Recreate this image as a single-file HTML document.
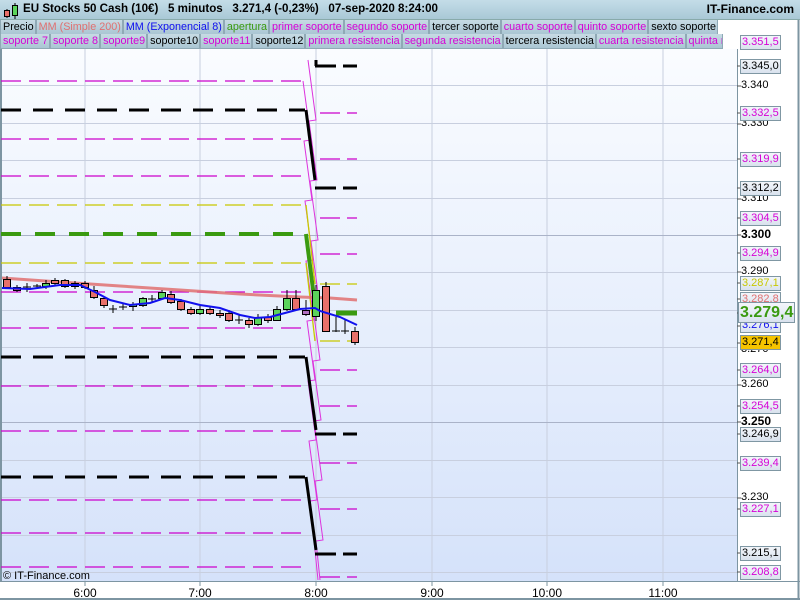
<!DOCTYPE html>
<html><head><meta charset="utf-8"><style>
body{margin:0;width:800px;height:600px;overflow:hidden;background:#fff;font-family:"Liberation Sans",sans-serif;position:relative}
#top{position:absolute;left:0;top:0;width:800px;height:19px;background:linear-gradient(#c4dde8,#a9c8d6);border-bottom:1px solid #8aa;}
#top .t{position:absolute;left:23px;top:2px;font-size:11.6px;font-weight:bold;color:#000;white-space:pre}
#top .r{position:absolute;right:6px;top:2px;font-size:12px;font-weight:bold}
.row{position:absolute;left:0;height:15px;display:flex;background:#fff}
.row span{font-size:10.8px;line-height:14px;padding:0 1px 0 2px;background:linear-gradient(#c7dbe4,#aac6d3);border:1px solid #8fa9b5;border-top:0;white-space:nowrap}
.m{color:#d600d6}.k{color:#000}
.lab{position:absolute;font-size:11px;left:741px;line-height:13px;white-space:nowrap}
.bx{border:1px solid #7f97a3;background:linear-gradient(#f3f6fb,#d9e2ee);padding:0 1px;left:740px}
</style></head><body>
<svg width="800" height="600" style="position:absolute;left:0;top:0">
<defs><linearGradient id="g" x1="0" y1="0" x2="0" y2="1"><stop offset="0" stop-color="#fafcff"/><stop offset="1" stop-color="#d5e2fa"/></linearGradient></defs>
<rect x="2" y="49" width="735" height="532" fill="url(#g)"/>
<line x1="1" y1="0" x2="1" y2="600" stroke="#7d95a2" stroke-width="2"/>
<g stroke="#c8cfdf" stroke-width="1">
<line x1="85" y1="49" x2="85" y2="581"/><line x1="200" y1="49" x2="200" y2="581"/><line x1="316" y1="49" x2="316" y2="581"/><line x1="432" y1="49" x2="432" y2="581"/><line x1="547" y1="49" x2="547" y2="581"/><line x1="663" y1="49" x2="663" y2="581"/>
<line x1="2" y1="85.5" x2="737" y2="85.5"/><line x1="2" y1="123.5" x2="737" y2="123.5"/><line x1="2" y1="160.5" x2="737" y2="160.5"/><line x1="2" y1="198.5" x2="737" y2="198.5"/><line x1="2" y1="272.5" x2="737" y2="272.5"/><line x1="2" y1="310.5" x2="737" y2="310.5"/><line x1="2" y1="347.5" x2="737" y2="347.5"/><line x1="2" y1="385.5" x2="737" y2="385.5"/><line x1="2" y1="460.5" x2="737" y2="460.5"/><line x1="2" y1="497.5" x2="737" y2="497.5"/><line x1="2" y1="535.5" x2="737" y2="535.5"/><line x1="2" y1="572.5" x2="737" y2="572.5"/>
</g>
<g stroke="#aab3c8"><line x1="2" y1="235.5" x2="737" y2="235.5"/><line x1="2" y1="422.5" x2="737" y2="422.5"/></g>
<g stroke="#cc00cc" stroke-width="1.3" stroke-dasharray="20 8">
<line x1="1" y1="81" x2="305" y2="81"/><line x1="1" y1="139" x2="305" y2="139"/><line x1="1" y1="176" x2="305" y2="176"/><line x1="1" y1="292" x2="305" y2="292"/><line x1="1" y1="328" x2="305" y2="328"/><line x1="1" y1="386" x2="305" y2="386"/><line x1="1" y1="431" x2="305" y2="431"/><line x1="1" y1="500" x2="305" y2="500"/><line x1="1" y1="533" x2="305" y2="533"/><line x1="1" y1="567" x2="305" y2="567"/>
</g>
<g stroke="#c8c800" stroke-width="1.3" stroke-dasharray="20 8"><line x1="1" y1="205" x2="305" y2="205"/><line x1="1" y1="263" x2="305" y2="263"/></g>
<g stroke="#000" stroke-width="3" stroke-dasharray="20 12"><line x1="1" y1="110" x2="305" y2="110"/><line x1="1" y1="357" x2="305" y2="357"/><line x1="1" y1="477" x2="305" y2="477"/></g>
<line x1="1" y1="234" x2="305" y2="234" stroke="#3a9a10" stroke-width="4" stroke-dasharray="20 14"/>
<g stroke="#dd33dd" stroke-width="1" fill="none">
<polyline points="303,81 311,140 304,141 312,200 305,201 313,260 306,261 314,320 307,321 315,380 308,381 316,440 309,441 317,500 310,501 318,580"/>
<polyline points="308,60 316,120 309,121 317,180 310,181 318,240 311,241 319,300 312,301 320,360 313,361 321,420 314,421 322,480 315,481 323,540 316,541 320,580"/>
</g>
<g stroke="#000" stroke-width="3"><line x1="306" y1="110" x2="315" y2="180"/><line x1="306" y1="357" x2="316" y2="430"/><line x1="306" y1="477" x2="316" y2="550"/><line x1="316" y1="60" x2="316" y2="66"/></g>
<g stroke="#3a9a10" stroke-width="4"><line x1="306" y1="234" x2="316" y2="313"/></g>
<g stroke="#c8c800" stroke-width="1.3"><line x1="306" y1="205" x2="315" y2="284"/><line x1="306" y1="263" x2="315" y2="341"/></g>
<g stroke="#000" stroke-width="3"><line x1="315" y1="66" x2="336" y2="66"/><line x1="343" y1="66" x2="357" y2="66"/><line x1="315" y1="188" x2="336" y2="188"/><line x1="343" y1="188" x2="357" y2="188"/><line x1="315" y1="434" x2="336" y2="434"/><line x1="343" y1="434" x2="357" y2="434"/><line x1="315" y1="554" x2="336" y2="554"/><line x1="343" y1="554" x2="357" y2="554"/></g>
<g stroke="#cc00cc" stroke-width="1.3">
<path d="M320 113h20M347 113h10M320 159h20M347 159h10M320 218h20M347 218h10M320 254h20M347 254h10M320 370h20M347 370h10M320 406h20M347 406h10M320 463h20M347 463h10M320 509h20M347 509h10M320 577h20M347 577h10"/></g>
<g stroke="#c8c800" stroke-width="1.3"><path d="M320 284h20M347 284h10M320 341h20M347 341h10"/></g>
<path d="M336 313h21" stroke="#3a9a10" stroke-width="5"/>
<polyline points="2,278 60,282 120,286 180,290 240,294 300,297 330,298 357,300" stroke="#e07070" stroke-width="3" fill="none" opacity="0.85"/>
<g stroke="#000" stroke-width="1">
<path d="M7 276v13M17 285v7M27 283v9M37 284v4M46 280v9M55 278v8M65 279v9M75 281v8M85 281v8M94 286v13M104 296v12M113 305v8M123 304v6M133 302v9M143 297v10M152 295v7M162 290v10M171 291v13M181 299v12M191 307v8M200 306v9M210 307v8M220 310v8M229 310v12M239 315v9M249 318v10M258 314v12M268 314v9M277 306v15M287 290v21M296 290v21M306 300v16M316 285v36M326 282v50M336 317v15M345 320v14M355 327v18"/>
<path d="M23 287h8M33 286h8M109 309h8M119 307h8M148 299h8M235 320h8M332 331h8M341 331h8"/>
</g>
<g stroke="#000" stroke-width="1">
<rect x="3.5" y="279.5" width="7" height="8" fill="#e8706a"/><rect x="13.5" y="287.5" width="7" height="3" fill="#e8706a"/>
<rect x="42.5" y="283.5" width="7" height="3" fill="#5bd45b"/><rect x="51.5" y="280.5" width="7" height="3" fill="#e8706a"/><rect x="61.5" y="280.5" width="7" height="6" fill="#e8706a"/><rect x="71.5" y="283.5" width="7" height="3" fill="#5bd45b"/><rect x="81.5" y="283.5" width="7" height="4" fill="#e8706a"/>
<rect x="90.5" y="290.5" width="7" height="7" fill="#e8706a"/><rect x="100.5" y="298.5" width="7" height="7" fill="#e8706a"/>
<rect x="129.5" y="304.5" width="7" height="2" fill="#5bd45b"/><rect x="139.5" y="298.5" width="7" height="7" fill="#5bd45b"/><rect x="158.5" y="292.5" width="7" height="6" fill="#5bd45b"/><rect x="167.5" y="294.5" width="7" height="8" fill="#e8706a"/><rect x="177.5" y="301.5" width="7" height="8" fill="#e8706a"/>
<rect x="187.5" y="309.5" width="7" height="4" fill="#e8706a"/><rect x="196.5" y="309.5" width="7" height="4" fill="#5bd45b"/><rect x="206.5" y="309.5" width="7" height="4" fill="#e8706a"/><rect x="216.5" y="313.5" width="7" height="2" fill="#e8706a"/><rect x="225.5" y="313.5" width="7" height="7" fill="#e8706a"/>
<rect x="245.5" y="320.5" width="7" height="4" fill="#e8706a"/><rect x="254.5" y="317.5" width="7" height="7" fill="#5bd45b"/><rect x="264.5" y="317.5" width="7" height="3" fill="#e8706a"/><rect x="273.5" y="309.5" width="7" height="11" fill="#5bd45b"/><rect x="283.5" y="298.5" width="7" height="11" fill="#5bd45b"/><rect x="292.5" y="298.5" width="7" height="11" fill="#e8706a"/>
<rect x="302.5" y="310.5" width="7" height="4" fill="#b070c0"/><rect x="312.5" y="290.5" width="7" height="26" fill="#5bd45b"/><rect x="322.5" y="286.5" width="7" height="45" fill="#e8706a"/><rect x="351.5" y="331.5" width="7" height="11" fill="#e8706a"/>
</g>
<polyline points="2,288 30,289 60,285 80,285 95,292 110,300 130,305 150,303 165,298 180,300 200,305 220,308 240,315 255,318 270,317 285,313 300,309 315,308 320,311 340,317 357,325" stroke="#1010ee" stroke-width="2" fill="none"/>
<rect x="0" y="581" width="800" height="19" fill="#fff"/>
<line x1="0" y1="581.5" x2="800" y2="581.5" stroke="#7d95a2"/>
<line x1="737.5" y1="49" x2="737.5" y2="581" stroke="#7d95a2"/>
<line x1="798.5" y1="0" x2="798.5" y2="600" stroke="#7d95a2" stroke-width="2"/>
<line x1="0" y1="599" x2="800" y2="599" stroke="#7d95a2" stroke-width="2"/>
<g stroke="#7d95a2"><path d="M85 581v5M200 581v5M316 581v5M432 581v5M547 581v5M663 581v5"/></g>
<g font-size="12" fill="#000" text-anchor="middle" font-family="Liberation Sans"><text x="85" y="597">6:00</text><text x="200" y="597">7:00</text><text x="316" y="597">8:00</text><text x="432" y="597">9:00</text><text x="547" y="597">10:00</text><text x="663" y="597">11:00</text></g>
<text x="3" y="579" font-size="11" font-family="Liberation Sans">© IT-Finance.com</text>
<g stroke="#555"><path d="M737 66h4M737 86h4M737 113h4M737 124h4M737 159h4M737 188h4M737 199h4M737 218h4M737 235h4M737 253h4M737 272h4M737 283h4M737 299h4M737 313h4M737 326h4M737 343h4M737 370h4M737 385h4M737 406h4M737 422h4M737 434h4M737 463h4M737 498h4M737 509h4M737 553h4M737 572h4"/></g>
</svg>
<div id="top"><svg width="18" height="19" style="position:absolute;left:2px;top:1px"><path d="M5 8v9M13 2v16" stroke="#000"/><rect x="2.5" y="9.5" width="5" height="6" fill="#e8706a" stroke="#000"/><rect x="10.5" y="4.5" width="5" height="10" fill="#5bd45b" stroke="#000"/></svg><div class="t">EU Stocks 50 Cash (10€)   5 minutos   3.271,4 (-0,23%)   07-sep-2020 8:24:00</div><div class="r">IT-Finance.com</div></div>
<div class="row" style="top:20px"><span class="k">Precio</span><span style="color:#e07070">MM (Simple 200)</span><span style="color:#1010ee">MM (Exponencial 8)</span><span style="color:#3a9a10">apertura</span><span class="m">primer soporte</span><span class="m">segundo soporte</span><span class="k">tercer soporte</span><span class="m">cuarto soporte</span><span class="m">quinto soporte</span><span class="k">sexto soporte</span></div>
<div class="row" style="top:34px"><span class="m">soporte 7</span><span class="m">soporte 8</span><span class="m">soporte9</span><span class="k">soporte10</span><span class="m">soporte11</span><span class="k">soporte12</span><span class="m">primera resistencia</span><span class="m">segunda resistencia</span><span class="k">tercera resistencia</span><span class="m">cuarta resistencia</span><span class="m" style="width:32px;overflow:hidden">quinta resistencia</span></div>
<div class="lab bx m" style="top:35px">3.351,5</div>
<div class="lab bx" style="top:59px">3.345,0</div>
<div class="lab" style="top:79px">3.340</div>
<div class="lab" style="top:117px">3.330</div>
<div class="lab bx m" style="top:106px">3.332,5</div>
<div class="lab bx m" style="top:152px">3.319,9</div>
<div class="lab" style="top:192px">3.310</div>
<div class="lab bx" style="top:181px">3.312,2</div>
<div class="lab bx m" style="top:211px">3.304,5</div>
<div class="lab" style="top:228px;font-weight:bold;font-size:12px">3.300</div>
<div class="lab bx m" style="top:246px">3.294,9</div>
<div class="lab" style="top:265px">3.290</div>
<div class="lab bx" style="top:276px;color:#c8c800">3.287,1</div>
<div class="lab bx" style="top:292px;color:#e07070">3.282,8</div>
<div class="lab bx" style="top:318px;color:#1010ee">3.276,1</div>
<div class="lab bx" style="top:302px;left:738px;font-size:16px;line-height:19px;font-weight:bold;color:#3a9a10">3.279,4</div>
<div class="lab" style="top:343px">3.270</div>
<div class="lab bx" style="top:335px;background:#f5c400">3.271,4</div>
<div class="lab bx m" style="top:363px">3.264,0</div>
<div class="lab" style="top:378px">3.260</div>
<div class="lab bx m" style="top:399px">3.254,5</div>
<div class="lab" style="top:415px;font-weight:bold;font-size:12px">3.250</div>
<div class="lab bx" style="top:427px">3.246,9</div>
<div class="lab bx m" style="top:456px">3.239,4</div>
<div class="lab" style="top:491px">3.230</div>
<div class="lab bx m" style="top:502px">3.227,1</div>
<div class="lab bx" style="top:546px">3.215,1</div>
<div class="lab bx m" style="top:565px">3.208,8</div>
</body></html>
